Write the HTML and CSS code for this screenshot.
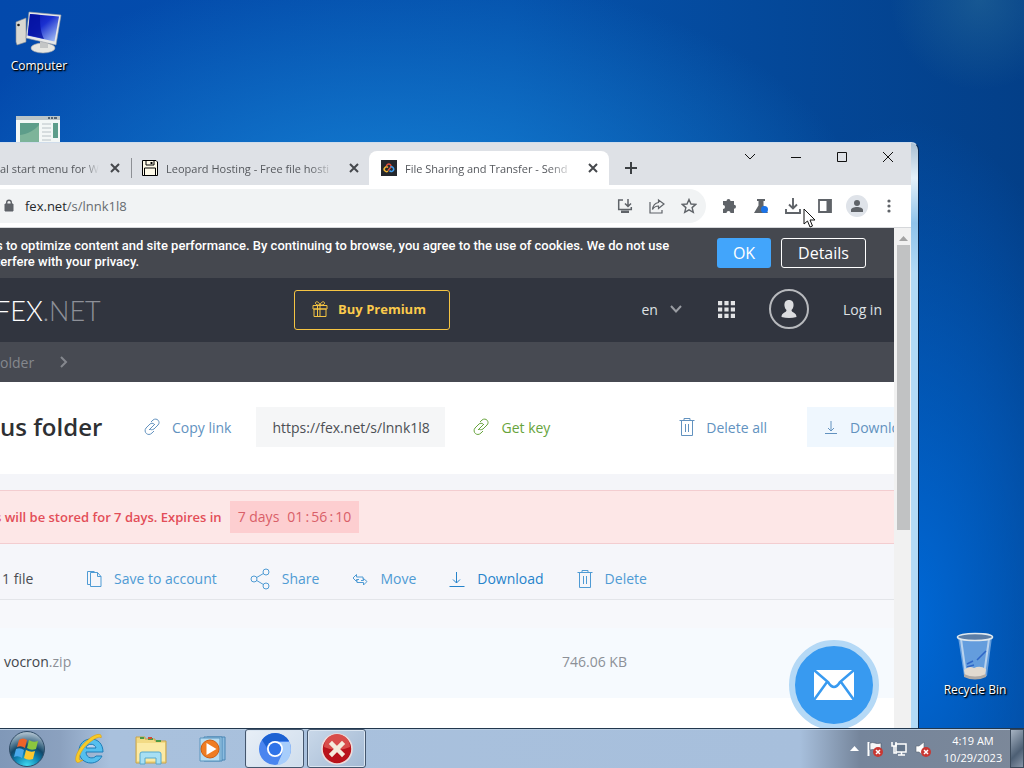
FILE: index.html
```
<!DOCTYPE html>
<html lang="en">
<head>
    <meta charset="utf-8">
    <title>File Sharing and Transfer</title>
    <link rel="stylesheet" href="styles.css">
</head>
<body>
    <main class="desktop">
        <a class="shortcut shortcut-computer" href="#">
            <svg width="48" height="44" viewBox="0 0 48 44">
                <defs>
                    <linearGradient id="screen" x1="0" y1="0" x2="1" y2="1">
                        <stop offset="0" stop-color="#0613a8"/>
                        <stop offset="0.45" stop-color="#1a30d0"/>
                        <stop offset="1" stop-color="#b9d4fa"/>
                    </linearGradient>
                </defs>
                <path d="M1 12l10-4v24l-9 3-1-3z" fill="#d9d8d2" stroke="#8d8f92" stroke-width=".6"/>
                <circle cx="3.500" cy="15" r="1.300" fill="#222"/>
                <ellipse cx="28" cy="38" rx="12" ry="5" fill="#e6e6e2" stroke="#a2a5a8" stroke-width=".6"/>
                <path d="M25 31l8 1v6h-8z" fill="#c4c6c6"/>
                <path d="M14 2l32 3-5 30-30-7z" fill="#e8e9e9" stroke="#9a9ea4" stroke-width=".6"/>
                <path d="M15 4l29 2.500-4.500 25-27-6z" fill="url(#screen)"/>
                <path d="M25 5c0 8 0 16 4 24l-16-4 2-21z" fill="#0412a0" opacity=".8"/>
            </svg>
            <span>Computer</span>
        </a>
        <svg class="shortcut-app" width="44" height="30" viewBox="0 0 44 30">
            <path d="M0 0h44v30H0z" fill="#f3f7f6"/>
            <path d="M0 0h44v4H0z" fill="#b9c4c8"/>
            <path d="M32 2h2m1 0h2m1 0h3" stroke="#345" stroke-width="1.500"/>
            <path d="M4 7h19v23H4z" fill="#5d9d8a"/>
            <path d="M4 19c8-1 15-5 19-10v21H4z" fill="#7db49a"/>
            <path d="M26 8h9M26 12h9M26 16h9M26 20h9M26 24h9" stroke="#b9c2c6"/>
            <path d="M37 7h5v15h-5z" fill="#5d9d8a"/>
        </svg>
        <a class="shortcut shortcut-bin" href="#">
            <svg width="40" height="50" viewBox="0 0 40 50">
                <path d="M3 5h34l-5 39q-11 5-23 0z" fill="#8fb9ea" opacity=".7"/>
                <path d="M6 7l5 36M34 7l-5 36" stroke="#dce9f5" stroke-width="2" opacity=".7"/>
                <path d="M12 32l6-3M22 28l9-9M12 35l7-2" stroke="#2259c2" stroke-width="1.500" fill="none" opacity=".8"/>
                <path d="M9 38q5-5 10-2 6-3 12 1l-1 7q-10 4-20 0z" fill="#e2dad0"/>
                <path d="M9 42q11 5 22 0v3q-11 5-22 0z" fill="#b0aaa6"/>
                <ellipse cx="20" cy="5" rx="17.500" ry="3.500" fill="#5b7da6" stroke="#dfe8ee" stroke-width="1.600"/>
            </svg>
            <span>Recycle Bin</span>
        </a>

        <section class="window">
            <header class="tab-strip">
                <div class="tab tab-first">
                    <span class="tab-title">al start menu for W</span>
                    <button class="tab-close" aria-label="Close tab"><svg width="10" height="10" viewBox="0 0 10 10"><path d="M1 1l8 8M9 1l-8 8"/></svg></button>
                </div>
                <div class="tab tab-second">
                    <svg width="16" height="16" viewBox="0 0 16 16">
                        <path d="M.5.5h13.500l1.500 1.500v13.500H.5z" fill="#fffbe9" stroke="#000" stroke-width="1"/>
                        <path d="M4 1v4h8V1M2.500 15V8h11v7" fill="none" stroke="#000" stroke-width="1"/>
                        <path d="M8.500 2h2v2h-2z" fill="#000" stroke="none"/>
                    </svg>
                    <span class="tab-title">Leopard Hosting - Free file hosti</span>
                    <button class="tab-close" aria-label="Close tab"><svg width="10" height="10" viewBox="0 0 10 10"><path d="M1 1l8 8M9 1l-8 8"/></svg></button>
                </div>
                <div class="tab tab-active">
                    <svg width="16" height="16" viewBox="0 0 16 16">
                        <path d="M0 0h16v16H0z" fill="#24272c" stroke="none"/>
                        <g fill="none" stroke-width="1.500">
                            <path d="M7 7.500a2.300 2.300 0 1 0 0 3.500" stroke="#f2b632"/>
                            <path d="M5.500 6.500a2.300 2.300 0 1 1 4.500.5L7 10.500" stroke="#e3503e"/>
                            <path d="M8.500 10.500a2.300 2.300 0 1 0 1-3.500" stroke="#3f9ff0"/>
                        </g>
                    </svg>
                    <span class="tab-title">File Sharing and Transfer - Send</span>
                    <button class="tab-close" aria-label="Close tab"><svg width="10" height="10" viewBox="0 0 10 10"><path d="M1 1l8 8M9 1l-8 8"/></svg></button>
                </div>
                <button class="new-tab" aria-label="New tab"><svg width="12" height="12" viewBox="0 0 12 12"><path d="M6 0v12M0 6h12"/></svg></button>
                <div class="window-controls">
                    <button aria-label="Search tabs"><svg width="12" height="12" viewBox="0 0 12 12"><path d="M1 3l5 5 5-5"/></svg></button>
                    <button aria-label="Minimize"><svg width="12" height="12" viewBox="0 0 12 12"><path d="M1 6.500h10"/></svg></button>
                    <button aria-label="Maximize"><svg width="12" height="12" viewBox="0 0 12 12"><path d="M1.500 1.500h9v9h-9z"/></svg></button>
                    <button aria-label="Close"><svg width="12" height="12" viewBox="0 0 12 12"><path d="M1 1l10 10M11 1L1 11"/></svg></button>
                </div>
            </header>

            <div class="toolbar">
                <div class="address-bar">
                    <svg width="10" height="14" viewBox="0 0 10 14"><path d="M1 5h8v7H1z" fill="#5f6368" stroke="#5f6368" stroke-linejoin="round"/><path d="M2.700 5V3.500a2.300 2.300 0 0 1 4.600 0V5" fill="none" stroke="#5f6368" stroke-width="1.400"/></svg>
                    <span class="address"><b>fex.net</b>/s/lnnk1l8</span>
                    <button aria-label="Install app"><svg width="16" height="16" viewBox="0 0 16 16"><path d="M6 2H1.700v9.500h12.600V9M11 1v7M8 5.500l3 3 3-3" stroke-width="1.500"/><path d="M4 12.500h8V15H4z" class="solid"/></svg></button>
                    <button aria-label="Share this page"><svg width="16" height="16" viewBox="0 0 16 16"><path d="M1 4v11h12v-3M9.500 2l5.500 4-5.500 4.500V8C7 8 5 9 3.500 11.500 4 7.500 6 5 9.500 4.500z" stroke-width="1.200"/></svg></button>
                    <button aria-label="Bookmark"><svg width="16" height="16" viewBox="0 0 16 16"><path d="M8 1.500l2 4.500 4.800.4-3.700 3.200 1.200 4.800L8 11.900l-4.300 2.500 1.200-4.800L1.200 6.400 6 6z" stroke-width="1.400"/></svg></button>
                </div>
                <button aria-label="Extensions"><svg width="16" height="16" viewBox="0 0 16 16"><path class="solid" d="M2 3h3.500a2 2 0 1 1 4 0H13v3.800a2 2 0 1 1 0 4V15H9.500a2 2 0 1 0-4 0H2v-4a2 2 0 1 0 0-4z"/></svg></button>
                <button aria-label="Experiments"><svg width="16" height="16" viewBox="0 0 16 16"><path class="solid" d="M4 1h8v2h-1.500v4.500L15 15H1l4.500-7.500V3H4z"/><circle cx="11.500" cy="11.500" r="3.500" fill="#1a73e8"/></svg></button>
                <button aria-label="Downloads"><svg width="16" height="16" viewBox="0 0 16 16"><path d="M8 0v10M4 6.500l4 4 4-4M1 11v4h14v-4" stroke-width="1.900"/></svg></button>
                <button aria-label="Side panel"><svg width="16" height="16" viewBox="0 0 16 16"><path d="M2 2h12v12H2z" stroke-width="1.800"/><path class="solid" d="M9.500 2H14v12H9.500z"/></svg></button>
                <button class="profile" aria-label="Profile"><svg width="22" height="22" viewBox="0 0 22 22"><circle cx="11" cy="11" r="11" fill="#dfe3e9"/><circle class="solid" cx="11" cy="8" r="3"/><path class="solid" d="M5 17v-2c0-4 12-4 12 0v2z"/></svg></button>
                <button aria-label="Menu"><svg width="16" height="16" viewBox="0 0 16 16"><circle class="solid" cx="8" cy="3" r="1.600"/><circle class="solid" cx="8" cy="8" r="1.600"/><circle class="solid" cx="8" cy="13" r="1.600"/></svg></button>
            </div>

            <div class="viewport">
                <article class="page">
                    <div class="cookie-bar">
                        <p>s to optimize content and site performance. By continuing to browse, you agree to the use of cookies. We do not use<br>terfere with your privacy.</p>
                        <button class="cookie-ok">OK</button>
                        <button class="cookie-details">Details</button>
                    </div>
                    <nav class="site-nav">
                        <a class="logo" href="#">FEX<span>.NET</span></a>
                        <button class="premium">
                            <svg width="16" height="16" viewBox="0 0 16 16"><path d="M1 4.500h14v3.500H1zM2 8h12v7.500H2zM8 4.500v11M5.500 4.500v11M8 4C7 0 3 0 3.500 2.500 4 4 6 4 8 4c2 0 4 0 4.500-1.500C13 0 9 0 8 4" /></svg>
                            Buy Premium
                        </button>
                        <button class="language">en <svg width="12" height="8" viewBox="0 0 12 8"><path d="M1 1l5 5.500L11 1"/></svg></button>
                        <button class="apps" aria-label="Apps"><svg width="17" height="17" viewBox="0 0 17 17"><path d="M0 2.200h17M0 8.500h17M0 14.800h17" stroke-width="4.200" stroke-dasharray="4.200 2.200"/></svg></button>
                        <button class="avatar" aria-label="Account"><svg width="16" height="20" viewBox="0 0 16 20"><path d="M8 1c3 0 5 2 4.500 6-.3 2-1 3-2 4 0 3 5 2 5 7q-7.500 2-15 0c0-5 5-4 5-7-1-1-1.700-2-2-4C3 3 5 1 8 1z"/></svg></button>
                        <a class="log-in" href="#">Log in</a>
                    </nav>
                    <div class="breadcrumb">
                        <a href="#">older</a>
                        <svg width="8" height="12" viewBox="0 0 8 12"><path d="M1 1l5 5-5 5"/></svg>
                    </div>
                    <header class="folder">
                        <h1>us folder</h1>
                        <button class="copy-link"><svg width="18" height="18" viewBox="0 0 18 18"><path d="M6 12l6-6M8 4l2-2c4-3 8 2 5 5l-4 4c-2 1-3 1-4 0M11 13l-2 2c-4 4-9-1-6-5l4-4c1-1 3-1 4 0"/></svg>Copy link</button>
                        <input class="link-field" type="text" value="https://fex.net/s/lnnk1l8" aria-label="Folder link" readonly>
                        <button class="get-key"><svg width="18" height="18" viewBox="0 0 18 18"><path d="M6 12l6-6M8 4l2-2c4-3 8 2 5 5l-4 4c-2 1-3 1-4 0M11 13l-2 2c-4 4-9-1-6-5l4-4c1-1 3-1 4 0"/></svg>Get key</button>
                        <button class="delete-all"><svg width="16" height="18" viewBox="0 0 16 18"><path d="M.5 2.500h15M5 2.500v-2h6v2M2.500 2.500v15h11v-15M6.500 6v8M9.500 6v8"/></svg>Delete all</button>
                        <button class="download-all"><svg width="16" height="18" viewBox="0 0 16 18"><path d="M8 3v10M5 10l3 3 3-3M2 15.500h12"/></svg>Download all</button>
                    </header>
                    <div class="expiry">
                        <strong>s will be stored for 7 days. Expires in</strong>
                        <div class="countdown">7 days <time>01<i>:</i>56<i>:</i>10</time></div>
                    </div>
                    <div class="actions">
                        <span class="count">1 file</span>
                        <button class="save"><svg width="16" height="18" viewBox="0 0 16 18"><path d="M4.500 2.500h7l3.500 4v10H4.500zM11.500 2.500v4H15M4.500 14.500H1.500v-13h7"/></svg>Save to account</button>
                        <button class="share"><svg width="20" height="22" viewBox="0 0 20 22"><circle cx="4" cy="11" r="3"/><circle cx="16" cy="4" r="3"/><circle cx="16" cy="18" r="3"/><path d="M6.700 9.500l6.700-4M6.700 12.500l6.700 4"/></svg>Share</button>
                        <button class="move"><svg width="16" height="18" viewBox="0 0 16 18"><path d="M11 9.500V7H4.500V4.500L1 8l3.500 3.500V9.500h2.500M5 10v2.500h6.500V15l3.500-3.500L11.500 8.500v2H9"/></svg>Move</button>
                        <button class="download"><svg width="16" height="18" viewBox="0 0 16 18"><path d="M7.500 2v11M4 9.500L7.500 13 11 9.500M.5 16.500h15"/></svg>Download</button>
                        <button class="delete"><svg width="16" height="18" viewBox="0 0 16 18"><path d="M.5 2.500h15M5 2.500v-2h6v2M2.500 2.500v15h11v-15M6.500 6v8M9.500 6v8"/></svg>Delete</button>
                    </div>
                    <div class="file-row">
                        <a href="#">vocron<span>.zip</span></a>
                        <span class="file-size">746.06 KB</span>
                    </div>
                    <button class="chat" aria-label="Contact support"><svg width="40" height="30" viewBox="0 0 40 30"><path d="M0 0h40v30H0z" fill="#fff"/><path d="M0 0l14 12q6 10 12 0L40 0M0 30l13-18M40 30L27 12" fill="none" stroke="#389af0" stroke-width="2.500"/></svg></button>
                </article>
                <div class="scrollbar">
                    <svg width="9" height="5" viewBox="0 0 9 5"><path d="M0 5l4.500-5L9 5z" fill="#a3a3a3"/></svg>
                    <div class="thumb"></div>
                </div>
            </div>
        </section>
        <svg class="cursor" width="13" height="20" viewBox="0 0 13 20"><path d="M1 1v15l3.500-3 2.500 6 2.500-1-2.500-6H12z" fill="#fff" stroke="#111"/></svg>
    </main>

    <footer class="taskbar">
        <button class="task start" aria-label="Start">
            <svg width="38" height="38" viewBox="0 0 38 38">
                <defs>
                    <radialGradient id="orb" cx=".5" cy="1" r=".95">
                        <stop offset="0" stop-color="#43e0f5"/>
                        <stop offset=".4" stop-color="#0d7fae"/>
                        <stop offset=".62" stop-color="#124768"/>
                        <stop offset="1" stop-color="#a8bccb"/>
                    </radialGradient>
                </defs>
                <circle cx="19" cy="19" r="17.500" fill="url(#orb)" stroke="#314d68"/>
                <path d="M11 10q4-3 8 0l-2 8q-4-3-8-1z" fill="#ee6329"/>
                <path d="M21 10q4 3 9 1l-2 8q-5 2-9-1z" fill="#8cc63f"/>
                <path d="M8 19q4-2 8 1l-2 8q-4-3-8-1z" fill="#49a8ea"/>
                <path d="M18 20q5 3 9 1l-2 8q-5 2-9-1z" fill="#fdc82f"/>
            </svg>
        </button>
        <button class="task" aria-label="Internet Explorer">
            <svg width="34" height="34" viewBox="0 0 34 34">
                <path d="M29 24c-2 4-6 7-11 7C11 31 6 26 6 19S11 7 18 7s12 5 12 13H13c0 7 8 7 10 4z" fill="#55bfee" stroke="#1d7db8"/>
                <path d="M13 16h10c-1-5-9-5-10 0z" fill="#bcd3ec" stroke="#1d7db8"/>
                <path d="M28 6c2-5-5-5-12 1C7 13 1 25 3 29c1 3 4 1 7-1-8 3-2-11 6-17 6-5 11-7 12-5z" fill="#f8cb28" stroke="#d79c12" stroke-width=".6"/>
            </svg>
        </button>
        <button class="task" aria-label="Explorer">
            <svg width="34" height="34" viewBox="0 0 34 34">
                <path d="M2 5h9v2h10v2h11v22H2z" fill="#f2da84" stroke="#c8a348"/>
                <path d="M6 6h4M14 7h5M22 9h5" stroke="#4b9a46" stroke-width="2"/>
                <path d="M14 6h4" stroke="#d14d36" stroke-width="2"/>
                <path d="M3 11h28v18H3z" fill="#fbeaa5"/>
                <path d="M6 32V22q0-2 2-2h17q2 0 2 2v10h-5v-6H11v6z" fill="#a7dff3" stroke="#57a8cc"/>
            </svg>
        </button>
        <button class="task" aria-label="Media Player">
            <svg width="34" height="34" viewBox="0 0 34 34">
                <path d="M12 5h18v23H12z" fill="#8bbce0" stroke="#4a86b4"/>
                <path d="M9 5h18v24H9z" fill="#a9d5ef" stroke="#4a86b4"/>
                <path d="M5 6h20v23H5z" fill="#b6dcf2" stroke="#5a94bd"/>
                <circle cx="15" cy="17" r="9" fill="#ef7c22" stroke="#cf5e12"/>
                <path d="M11.500 11v12l10-6z" fill="#fff"/>
            </svg>
        </button>
        <button class="task task-open task-current" aria-label="Chromium">
            <svg width="32" height="32" viewBox="0 0 32 32">
                <circle cx="16" cy="16" r="16" fill="#4a85ef"/>
                <path d="M3 7A16 16 0 0 1 30 8H16a8 8 0 0 0-8 7z" fill="#1c61d2"/>
                <path d="M30.500 9H18l5.500 7c1 5-3 9-5 16C31 31 34 18 30.500 9z" fill="#a7cdfb"/>
                <circle cx="16" cy="16" r="8" fill="#fff"/>
                <circle cx="16" cy="16" r="6.200" fill="#2f73e8"/>
            </svg>
        </button>
        <button class="task task-open" aria-label="Program">
            <svg width="32" height="32" viewBox="0 0 32 32">
                <circle cx="16" cy="16" r="15" fill="#b9131b" stroke="#ecdcdc" stroke-width="1.600"/>
                <path d="M3 14a13 13 0 0 1 26 0q-13 6-26 0z" fill="#d84d4b"/>
                <path d="M11 11l10 10M21 11L11 21" stroke="#f4ecdc" stroke-width="4.500" stroke-linecap="square"/>
            </svg>
        </button>
        <div class="tray">
            <svg width="9" height="5" viewBox="0 0 9 5"><path d="M0 5l4.500-5L9 5z" fill="#fff"/></svg>
            <svg width="16" height="16" viewBox="0 0 16 16"><path d="M1.500 1v14" stroke="#fff" stroke-width="2"/><path d="M3 2q3-1 5 0t6 0v7q-4 1-6 0t-5 0z" fill="#f6f6f6" stroke="#465364" stroke-width=".6"/><circle cx="11" cy="11" r="5" fill="#c93732"/><path d="M9 9l4 4M13 9l-4 4" stroke="#fff" stroke-width="1.500"/></svg>
            <svg width="16" height="16" viewBox="0 0 16 16"><path d="M5 3h10v8H5z" fill="#64758a" stroke="#fff" stroke-width="1.500"/><path d="M7 14h7M10.500 11v3M1 1v4h4V1M3 5v7h3" fill="none" stroke="#fff" stroke-width="1.500"/></svg>
            <svg width="16" height="16" viewBox="0 0 16 16"><path d="M1 5h3l5-4v14l-5-4H1z" fill="#fff" stroke="#5a6472" stroke-width=".6"/><circle cx="11" cy="11" r="5" fill="#c93732"/><path d="M9 9l4 4M13 9l-4 4" stroke="#fff" stroke-width="1.500"/></svg>
        </div>
        <time class="clock">4:19 AM<br>10/29/2023</time>
        <button class="show-desktop" aria-label="Show desktop"></button>
    </footer>
</body>
</html>
```
FILE: styles.css
```
* {
    box-sizing: border-box;
}
body {
    margin: 0;
    height: 100vh;
    display: flex;
    flex-direction: column;
    overflow: hidden;
    font-family: "Open Sans", "Noto Sans", sans-serif;
    font-size: 11px;
}
button {
    display: flex;
    align-items: center;
    justify-content: center;
    flex: none;
    padding: 0;
    border: none;
    background: none;
    font: inherit;
    color: inherit;
    white-space: nowrap;
}
a {
    color: inherit;
    text-decoration: none;
}
svg {
    display: block;
    flex: none;
}

/* desktop */
.desktop {
    position: relative;
    flex: 1;
    overflow: hidden;
    background:
        radial-gradient(ellipse 90px 90px at 980px 0, rgba(60, 130, 160, 0.35), rgba(60, 130, 160, 0)),
        radial-gradient(ellipse 220px 500px at 910px 620px, #0068d6, rgba(0, 96, 200, 0)),
        radial-gradient(ellipse 480px 260px at 390px 230px, #1684d8, rgba(10, 100, 200, 0)),
        linear-gradient(90deg, #0349ac, #0552ac 50%, #033f88);
}
.shortcut {
    position: absolute;
    display: flex;
    flex-direction: column;
    align-items: center;
    width: 78px;
    color: white;
    font-size: 12px;
    line-height: 16px;
    text-shadow: 1px 1px 2px black, 1px 1px 1px black;
}
.shortcut-computer {
    left: 0;
    top: 10px;
    gap: 4px;
}
.shortcut-bin {
    right: 10px;
    bottom: 30px;
}
.shortcut-app {
    position: absolute;
    left: 16px;
    top: 116px;
}
.cursor {
    position: absolute;
    left: 803px;
    top: 208px;
}

/* browser window */
.window {
    position: absolute;
    left: -8px;
    right: 105px;
    top: 142px;
    bottom: 0;
    display: flex;
    flex-direction: column;
    padding-right: 7px;
    background: linear-gradient(#a9bfd2, #e4f1fa 35px, #8fc3ea 80px, #b2daf6 130px);
    border-right: 1px solid #06264f;
    border-top: 1px solid #cfdceb;
    border-radius: 0 8px 0 0;
}
.tab-strip {
    display: flex;
    align-items: flex-end;
    height: 42px;
    background: #dee1e6;
}
.tab {
    display: flex;
    align-items: center;
    height: 34px;
    color: #55585d;
}
.tab-title {
    flex: 1;
    overflow: hidden;
    white-space: nowrap;
    -webkit-mask-image: linear-gradient(90deg, black 85%, transparent);
    mask-image: linear-gradient(90deg, black 85%, transparent);
}
.tab svg {
    stroke: #45484c;
    stroke-width: 2;
}
.tab-close {
    width: 16px;
    height: 16px;
}
.tab-first {
    width: 131px;
    padding-left: 8px;
}
.tab-first .tab-title {
    margin-right: 8px;
}
.tab-second {
    width: 238px;
    margin-left: 8px;
    padding-right: 7px;
    gap: 8px;
}
.tab-second::before {
    content: "";
    width: 1px;
    height: 20px;
    margin-right: 2px;
    background: #8d9095;
}
.tab-second .tab-title {
    margin-right: 3px;
}
.tab-active {
    width: 240px;
    padding: 0 8px 0 12px;
    gap: 8px;
    background: white;
    border-radius: 8px 8px 0 0;
}
.tab-active .tab-title {
    margin-right: 3px;
}
.new-tab {
    width: 28px;
    height: 34px;
    margin-left: 8px;
}
.new-tab svg {
    stroke: #3c4043;
    stroke-width: 2;
}
.window-controls {
    display: flex;
    align-self: flex-start;
    margin-left: auto;
}
.window-controls button {
    width: 46px;
    height: 28px;
}
.window-controls svg {
    fill: none;
    stroke: #111;
}
.toolbar {
    display: flex;
    align-items: center;
    gap: 16px;
    height: 43px;
    padding-right: 14px;
    background: white;
    border-bottom: 1px solid #d5d7da;
}
.toolbar svg {
    fill: none;
    stroke: #5f6368;
}
.toolbar .solid {
    fill: #5f6368;
    stroke: none;
}
.toolbar circle {
    stroke: none;
}
.toolbar .profile {
    margin: 0 -3px;
}
.address-bar {
    display: flex;
    align-items: center;
    flex: 1;
    gap: 16px;
    height: 34px;
    padding: 0 9px 0 12px;
    margin-right: -1px;
    background: #f1f3f4;
    border-radius: 0 17px 17px 0;
}
.address {
    flex: 1;
    margin-left: -5px;
    color: #666b70;
    font-size: 13px;
}
.address b {
    color: #25282b;
    font-weight: normal;
}

/* web page */
.viewport {
    display: flex;
    flex: 1;
    min-height: 0;
}
.page {
    position: relative;
    flex: 1;
    min-width: 0;
    overflow: hidden;
    background: white;
    font-size: 14px;
}
.cookie-bar {
    display: flex;
    align-items: center;
    gap: 10px;
    height: 50px;
    padding: 0 28px 0 4px;
    background: #45484f;
    color: white;
    font-size: 13px;
    line-height: 16px;
}
.cookie-bar p {
    flex: 1;
    margin: 0;
    padding-top: 2px;
    font-family: Roboto, sans-serif;
    font-weight: 500;
    white-space: nowrap;
}
.cookie-bar button {
    height: 30px;
    border-radius: 3px;
    font-size: 16px;
}
.cookie-ok {
    width: 54px;
    background: #42a5fb;
}
.cookie-bar .cookie-details {
    width: 85px;
    border: 1px solid white;
}
.site-nav {
    display: flex;
    align-items: center;
    height: 64px;
    padding: 0 12px 2px 3px;
    background: #31353f;
    color: #dfe1e4;
}
.logo,
.premium {
    margin-top: 2px;
}
.logo {
    width: 299px;
    color: white;
    font-family: Lato, sans-serif;
    font-weight: 300;
    font-size: 27px;
}
.logo span {
    color: #8d9098;
}
.premium {
    width: 156px;
    height: 40px;
    gap: 10px;
    padding: 0 6px 2px 0;
    margin-right: auto;
    border: 1px solid #f5c443;
    border-radius: 3px;
    color: #fbca4c;
    font-size: 13px;
    font-weight: bold;
}
.premium svg {
    fill: none;
    stroke: #f5c443;
}
.language {
    gap: 12px;
}
.language svg {
    fill: none;
    stroke: #9a9da3;
    stroke-width: 2;
}
.apps {
    margin-left: 36px;
}
.apps svg {
    stroke: #e2e3e5;
}
.avatar {
    width: 40px;
    height: 40px;
    margin: 0 34px;
    border: 2px solid #b7b9bd;
    border-radius: 50%;
}
.avatar svg {
    fill: #dcdde0;
}
.breadcrumb {
    display: flex;
    align-items: center;
    gap: 26px;
    height: 40px;
    padding-left: 8px;
    background: #474a52;
    color: #85888e;
}
.breadcrumb svg {
    fill: none;
    stroke: #85888e;
    stroke-width: 2;
}
.folder {
    display: flex;
    align-items: center;
    height: 92px;
    padding: 0 0 2px 8px;
    color: #6292bf;
}
.folder h1 {
    width: 143px;
    margin: 0;
    color: #2e3033;
    font-size: 24px;
    font-weight: 600;
    line-height: 32px;
    white-space: nowrap;
}
.folder svg,
.actions svg {
    fill: none;
    stroke: currentColor;
}
.folder button {
    gap: 11px;
}
.link-field {
    width: 189px;
    height: 40px;
    margin: 0 27px 0 25px;
    padding: 0 14px 0 16px;
    border: none;
    background: #f5f6f7;
    color: #4c4f54;
    font: inherit;
}
.get-key {
    color: #67a43c;
}
.delete-all {
    margin-left: auto;
}
.folder .download-all {
    width: 100px;
    height: 40px;
    margin-left: 40px;
    margin-right: -13px;
    padding-left: 16px;
    justify-content: flex-start;
    background: #eff7fe;
}
.expiry {
    display: flex;
    align-items: center;
    gap: 8px;
    height: 70px;
    padding: 0 3px;
    border-top: 16px solid #f4f5f9;
    background: #fde7e7;
    box-shadow: inset 0 1px #f3cdd0, inset 0 -1px #f3cdd0;
    color: #e34e58;
    font-size: 13px;
}
.expiry strong {
    font-weight: 600;
}
.countdown {
    display: flex;
    gap: 8px;
    padding: 6px 8px;
    background: #fdced0;
    color: #d95f68;
    font-size: 14px;
    line-height: 20px;
}
.countdown i {
    display: inline-block;
    width: 8px;
    font-style: normal;
    text-align: center;
}
.actions {
    display: flex;
    align-items: center;
    height: 56px;
    padding: 14px 0 0 10px;
    background: #f5f6fa;
    border-bottom: 1px solid #e3e5e9;
    color: #4f9bd4;
}
.actions button {
    gap: 12px;
}
.count {
    width: 84px;
    color: #4a4d52;
}
.share,
.move,
.download,
.delete {
    margin-left: 33px;
}
.actions .download {
    color: #2583cb;
}
.file-row {
    display: flex;
    align-items: center;
    height: 98px;
    padding: 0 267px 4px 12px;
    justify-content: space-between;
    background: #f6fafe;
    border-top: 28px solid #f7f8fb;
    color: #43474c;
}
.file-row span {
    color: #8c9097;
}
.chat {
    position: absolute;
    right: 15px;
    bottom: -2px;
    width: 90px;
    height: 90px;
    border: 6px solid #b5d9f6;
    border-radius: 50%;
    background: #389af0;
}
.scrollbar {
    display: flex;
    flex-direction: column;
    align-items: center;
    gap: 4px;
    width: 17px;
    padding: 8px 1px 0 2px;
    background: #f1f1f1;
}
.scrollbar .thumb {
    width: 13px;
    height: 285px;
    background: #c1c2c3;
}

/* taskbar */
.taskbar {
    display: flex;
    height: 40px;
    border-top: 1px solid #22374d;
    background: linear-gradient(90deg, #8098b8, #8ba1bf 60px, #a9c1dd 110px, #a7bfdc 800px, #75859b 860px, #7c8899);
    box-shadow: inset 0 1px #b9cde2;
}
.task {
    width: 61px;
}
.start {
    width: 54px;
    margin-right: 5px;
}
.task-open {
    width: 59px;
    margin-right: 3px;
    border: 1px solid #44566d;
    border-radius: 3px;
    background: linear-gradient(135deg, #c9d8e9, #a3b9d3);
    box-shadow: inset 0 0 0 1px #dae5f1;
}
.task-current {
    margin-left: 3px;
    background: linear-gradient(135deg, #e8eff7, #cfddec);
}
.tray {
    display: flex;
    align-items: center;
    gap: 8px;
    margin: 0 5px 0 auto;
}
.clock {
    width: 74px;
    padding-top: 3px;
    color: white;
    line-height: 17px;
    text-align: center;
}
.show-desktop {
    width: 14px;
    border: 1px solid #3c4b5c;
    background: linear-gradient(135deg, #a7b4c3, #4d5f74 60%, #8795a7);
}
```
